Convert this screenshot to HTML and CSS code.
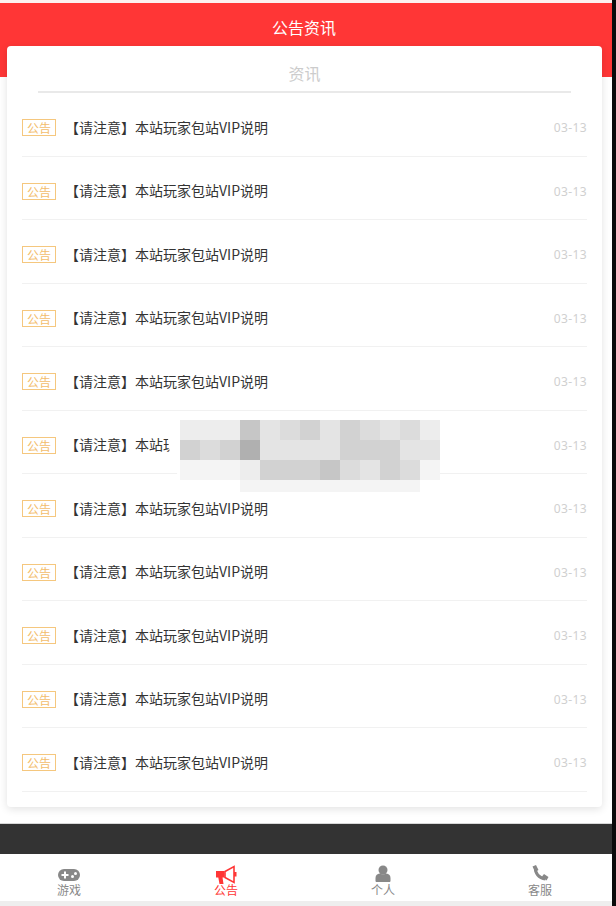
FILE: index.html
```html
<!DOCTYPE html>
<html lang="zh-CN">
<head>
  <meta charset="UTF-8">
  <title>公告资讯</title>
  <link rel="stylesheet" href="styles.css">
</head>
<body>

  <div class="page">
    <div class="top-line"></div>
    <div class="header">公告资讯</div>

    <div class="card">
      <div class="card-title">资讯</div>
      <ul class="news">
        <li><span class="tag">公告</span><span class="name">【请注意】本站玩家包站VIP说明</span><span class="date">03-13</span></li>
        <li><span class="tag">公告</span><span class="name">【请注意】本站玩家包站VIP说明</span><span class="date">03-13</span></li>
        <li><span class="tag">公告</span><span class="name">【请注意】本站玩家包站VIP说明</span><span class="date">03-13</span></li>
        <li><span class="tag">公告</span><span class="name">【请注意】本站玩家包站VIP说明</span><span class="date">03-13</span></li>
        <li><span class="tag">公告</span><span class="name">【请注意】本站玩家包站VIP说明</span><span class="date">03-13</span></li>
        <li><span class="tag">公告</span><span class="name">【请注意】本站玩家包站VIP说明</span><span class="date">03-13</span></li>
        <li><span class="tag">公告</span><span class="name">【请注意】本站玩家包站VIP说明</span><span class="date">03-13</span></li>
        <li><span class="tag">公告</span><span class="name">【请注意】本站玩家包站VIP说明</span><span class="date">03-13</span></li>
        <li><span class="tag">公告</span><span class="name">【请注意】本站玩家包站VIP说明</span><span class="date">03-13</span></li>
        <li><span class="tag">公告</span><span class="name">【请注意】本站玩家包站VIP说明</span><span class="date">03-13</span></li>
        <li><span class="tag">公告</span><span class="name">【请注意】本站玩家包站VIP说明</span><span class="date">03-13</span></li>
      </ul>

      <!-- pixelated patch over the sixth row -->
      <div class="mosaic">
        <i class="s2"></i><i class="s2"></i><i class="s2"></i><i class="s6"></i><i class="s3"></i><i class="s4"></i><i class="s5"></i><i class="s3"></i><i class="s5"></i><i class="s4"></i><i class="s3"></i><i class="s4"></i><i class="s2"></i>
        <i class="s5"></i><i class="s4"></i><i class="s5"></i><i class="s7"></i><i class="s3"></i><i class="s3"></i><i class="s3"></i><i class="s3"></i><i class="s5"></i><i class="s5"></i><i class="s5"></i><i class="s3"></i><i class="s3"></i>
        <i class="s1"></i><i class="s1"></i><i class="s1"></i><i class="s2"></i><i class="s5"></i><i class="s5"></i><i class="s5"></i><i class="s6"></i><i class="s4"></i><i class="s3"></i><i class="s5"></i><i class="s4"></i><i class="s1"></i>
        <i></i><i></i><i></i><i class="s1"></i><i class="s1"></i><i class="s1"></i><i class="s1"></i><i class="s1"></i><i class="s1"></i><i class="s1"></i><i class="s1"></i><i class="s1"></i><i></i>
      </div>
    </div>

    <div class="dark-bar"></div>

    <div class="tabbar">
      <div class="tab">
        <svg viewBox="0 0 22 20" width="22" height="20">
          <rect x="0" y="4" width="22" height="12" rx="6" fill="#888"/>
          <path d="M6 6.500h2v2.500h2.500v2h-2.500v2.500h-2v-2.500h-2.500v-2h2.500z" fill="#fff"/>
          <circle cx="14.500" cy="11.500" r="1.500" fill="#fff"/>
          <circle cx="17.500" cy="8.500" r="1.500" fill="#fff"/>
        </svg>
        <span>游戏</span>
      </div>
      <div class="tab active">
        <svg viewBox="0 0 22 20" width="22" height="20">
          <path d="M1 6h8.500v6.500h-2l1 6.500h-4l-1.200-6.500h-2.300z" fill="#ff3636"/>
          <path d="M10 6.500l9-5v16l-9-5z" fill="#fff" stroke="#ff3636" stroke-width="1.600"/>
          <rect x="19" y="7" width="2.500" height="4.500" fill="#ff3636"/>
        </svg>
        <span>公告</span>
      </div>
      <div class="tab">
        <svg viewBox="0 0 22 20" width="22" height="20">
          <circle cx="11" cy="5" r="4.500" fill="#888"/>
          <path d="M3.500 16v-3c0-3 2-4 4-4.500 1.500 1 5.500 1 7 0 2 .5 4 1.500 4 4.500v3c0 .5-.5 1-1 1h-13c-.5 0-1-.5-1-1z" fill="#888"/>
        </svg>
        <span>个人</span>
      </div>
      <div class="tab">
        <svg viewBox="0 0 22 20" width="22" height="20">
          <path d="M6.500 3c-.5 5 3 10 10 11" fill="none" stroke="#888" stroke-width="3"/>
          <path d="M3.500 1.500l3.500-1.500 2.500 5-3.500 2zM13 11.500l2-2.500 4.500 3-2 3.500z" fill="#888"/>
        </svg>
        <span>客服</span>
      </div>
    </div>

    <div class="bottom-line"></div>
  </div>

</body>
</html>
```

FILE: styles.css
```css
* { box-sizing: border-box; }
body { margin: 0; background: #0b0b0b; font-family: "Noto Sans CJK SC", "Noto Sans", sans-serif; }
.page { width: 612px; height: 906px; background: #fff; display: flex; flex-direction: column; overflow: hidden; }
.top-line { height: 3px; background: #fdf1f0; }
.header { height: 74px; padding: 13px 4px 0 0; background: #ff3636; color: #fff; font-size: 16px; line-height: 22px; text-align: center; }

.card { position: relative; width: 595px; height: 761px; margin: -31px 0 16px 7px; padding: 0 15px; background: #fff; border-radius: 4px; box-shadow: 0 2px 8px rgba(0, 0, 0, 0.12); }
.card-title { height: 47px; margin: 0 16px; padding-top: 16px; border-bottom: 2px solid #e9e9e9; color: #ccc; font-size: 16px; line-height: 22px; text-align: center; }

.news { list-style: none; margin: 0; padding: 0; }
.news li { display: flex; align-items: center; height: 63.5px; padding-top: 7px; border-bottom: 1px solid #f1f1f1; }
.tag { width: 34px; height: 17px; border: 1px solid #f5c77e; color: #f3bd6c; font-size: 12px; line-height: 15px; text-align: center; }
.name { margin: 0 0 2px 9px; color: #333; font-size: 14px; line-height: 20px; }
.date { margin-left: auto; color: #d0d0d0; font-family: "Noto Sans", sans-serif; font-size: 12px; letter-spacing: 0.4px; }

.mosaic { position: absolute; left: 173px; top: 374px; display: grid; grid-template-columns: repeat(13, 20px); grid-template-rows: 20px 20px 20px 12px; }
.mosaic::before { content: ""; position: absolute; left: -12px; top: 0; width: 12px; height: 60px; background: #fff; clip-path: polygon(100% 0, 0 30%, 20% 65%, 100% 100%); }
.s1 { background: #f4f4f4; }
.s2 { background: #ededed; }
.s3 { background: #e4e4e4; }
.s4 { background: #dcdcdc; }
.s5 { background: #d2d2d2; }
.s6 { background: #c6c6c6; }
.s7 { background: #b0b0b0; }

.dark-bar { height: 31px; background: #333; border-top: 1px solid #d8d8d8; }
.tabbar { height: 47px; padding: 11px 0 0 30px; display: flex; gap: 79px; background: #fff; }
.tab { width: 78px; display: flex; flex-direction: column; align-items: center; color: #888; font-size: 12px; line-height: 12px; }
.tab span { margin-top: -1px; }
.tab.active { color: #ff3636; }
.bottom-line { height: 5px; background: #eee; }
```
